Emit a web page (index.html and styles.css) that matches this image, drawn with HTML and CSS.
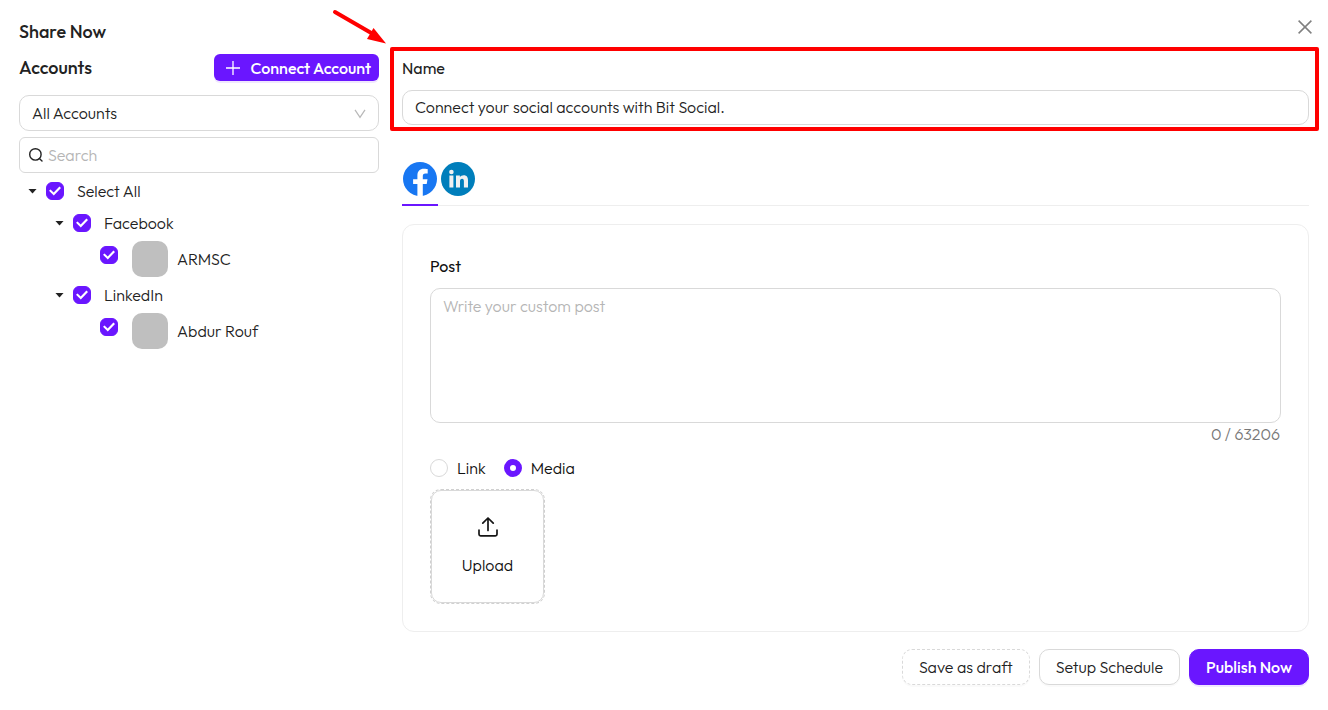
FILE: index.html
```html
<!DOCTYPE html>
<html lang="en">
<head>
<meta charset="utf-8">
<meta name="viewport" content="width=device-width, initial-scale=1">
<title>Share Now</title>
<link rel="stylesheet" href="styles.css">
</head>
<body>
<div class="share">
  <header class="share-header">
    <h1 class="title">Share Now</h1>
    <button class="close" type="button" aria-label="Close">
      <svg width="14" height="14" viewBox="0 0 14 14" fill="none" stroke="#808080" stroke-width="1.5"><path d="M.6.6l12.8 12.8M13.4.6L.6 13.4"/></svg>
    </button>
  </header>
  <div class="columns">
    <aside class="sidebar">
      <div class="accounts-head">
        <h2 class="title">Accounts</h2>
        <button class="connect" type="button">
          <svg width="14" height="14" viewBox="0 0 14 14" fill="none" stroke="#fff" stroke-width="1.3"><path d="M7 0v14M0 7h14"/></svg>
          Connect Account
        </button>
      </div>
      <div class="select-wrap">
        <select class="select" aria-label="Account filter"><option>All Accounts</option></select>
        <svg class="chevron" width="12" height="10" viewBox="0 0 12 10" fill="none" stroke="#b8b8b8" stroke-width="1.2"><path d="M1 .8l5 7.600 5-7.600"/></svg>
      </div>
      <div class="search">
        <svg width="16" height="16" viewBox="0 0 16 16" fill="none" stroke="#222" stroke-width="1.4"><circle cx="7.400" cy="7.400" r="5.700"/><path d="M11.400 11.400l2.600 2.500" stroke-linecap="round"/></svg>
        <input class="search-input" type="search" placeholder="Search" aria-label="Search">
      </div>
      <ul class="tree">
        <li>
          <div class="node">
            <span class="caret"></span>
            <label class="node-label"><input class="check" type="checkbox" checked>Select All</label>
          </div>
          <ul class="branch">
            <li>
              <div class="node">
                <span class="caret"></span>
                <label class="node-label"><input class="check" type="checkbox" checked>Facebook</label>
              </div>
              <label class="account"><input class="check" type="checkbox" checked><span class="avatar"></span>ARMSC</label>
            </li>
            <li>
              <div class="node">
                <span class="caret"></span>
                <label class="node-label"><input class="check" type="checkbox" checked>LinkedIn</label>
              </div>
              <label class="account"><input class="check" type="checkbox" checked><span class="avatar"></span>Abdur Rouf</label>
            </li>
          </ul>
        </li>
      </ul>
    </aside>
    <main class="main">
      <div class="name-field">
        <label class="name-label" for="name">Name</label>
        <input class="name-input" id="name" type="text" value="Connect your social accounts with Bit Social.">
        <div class="highlight"></div>
        <svg class="arrow" width="56" height="38" viewBox="0 0 56 38"><path d="M4 4L42 26" stroke="#f00" stroke-width="4" stroke-linecap="round"/><path d="M42.500 20L55 35.500 36 31Z" fill="#f00"/></svg>
      </div>
      <div class="tabs" role="tablist">
        <button class="tab tab-active" type="button" role="tab" aria-selected="true" aria-label="Facebook">
          <svg width="34" height="34" viewBox="0 0 34 34"><circle cx="17" cy="17" r="17" fill="#1877f2"/><path d="M14.400 34V22.100H10.100V17.200H14.400V13.500C14.400 9.200 16.900 6.800 20.900 6.800C22.700 6.800 24.700 7.200 24.700 7.200V11.400H22.500C20.300 11.400 19.800 12.700 19.800 14.100V17.200H24.500L23.700 22.100H19.800V34Z" fill="#fff"/></svg>
        </button>
        <button class="tab" type="button" role="tab" aria-selected="false" aria-label="LinkedIn">
          <svg width="34" height="34" viewBox="0 0 34 34"><circle cx="17" cy="17" r="17" fill="#007ebb"/><g fill="#f1f1f1"><circle cx="10.400" cy="10" r="2.300"/><path d="M8.400 13.600h4V25.600H8.400ZM15 13.600h3.900v1.600c.8-1.200 2.100-1.900 3.900-1.900 3.100 0 4.200 2.100 4.200 5.100v7.200h-4.100v-6.400c0-1.600-.4-2.500-1.800-2.500-1.500 0-2.100 1-2.100 2.500v6.400H15Z"/></g></svg>
        </button>
      </div>
      <section class="card">
        <label class="post-label" for="post">Post</label>
        <textarea class="post" id="post" placeholder="Write your custom post"></textarea>
        <div class="counter">0 / 63206</div>
        <div class="radios">
          <label class="radio-label"><input class="radio" type="radio" name="attach">Link</label>
          <label class="radio-label"><input class="radio" type="radio" name="attach" checked>Media</label>
        </div>
        <button class="upload" type="button">
          <span class="upload-inner">
            <svg width="20" height="20" viewBox="0 0 20 20" fill="none" stroke="#151515" stroke-width="1.700" stroke-linecap="round" stroke-linejoin="round"><path d="M1 13v4.200q0 1.600 1.600 1.600h14.800q1.600 0 1.600-1.600V13M10 13.500V1.200M4.800 6.200L10 1l5.200 5.200"/></svg>
            Upload
          </span>
        </button>
      </section>
      <div class="actions">
        <button class="btn btn-dashed" type="button">Save as draft</button>
        <button class="btn" type="button">Setup Schedule</button>
        <button class="btn btn-primary" type="button">Publish Now</button>
      </div>
    </main>
  </div>
</div>
</body>
</html>
```
FILE: styles.css
```css
* { box-sizing: border-box; }
body {
  margin: 0;
  background: #fff;
  color: #222;
  font: 300 16px/24px Outfit, Lato, sans-serif;
}
button, input, select, textarea { font: inherit; color: inherit; }
button { cursor: pointer; padding: 0; background: none; border: 0; }
svg { display: block; flex: none; }
ul { list-style: none; margin: 0; padding: 0; }

.share { padding: 14px 19px 24px; }
.share-header { display: flex; justify-content: space-between; align-items: flex-start; margin-right: -3px; }
.title { margin: 0; font-size: 18px; line-height: 36px; font-weight: 500; color: #222; }
.close { display: flex; align-items: center; height: 26px; }
.columns { display: grid; grid-template-columns: 360px minmax(0, 1fr); gap: 23px; }

.accounts-head { display: flex; justify-content: space-between; align-items: center; margin-bottom: 9px; height: 36px; }
.connect {
  display: flex; align-items: center; gap: 11px; height: 27px; padding: 0 8px 0 12px; margin-bottom: 1px;
  border-radius: 6px; background: #6a16ff; color: #fff; font-weight: 500;
  box-shadow: 0 2px 0 rgba(106, 22, 255, .1);
}
.select-wrap { position: relative; margin-bottom: 6px; }
.select {
  display: block; width: 100%; height: 36px; padding: 0 36px 0 12px; appearance: none;
  border: 1px solid #d9d9d9; border-radius: 10px; background: #fff;
}
.chevron { position: absolute; right: 13px; top: 14px; pointer-events: none; }
.search {
  display: flex; align-items: center; gap: 4px; height: 36px; padding: 0 9px 0 8px;
  border: 1px solid #d9d9d9; border-radius: 6px; margin-bottom: 2px;
}
.search-input { flex: 1; min-width: 0; border: 0; padding: 0; outline: 0; background: none; appearance: none; }
::placeholder { color: #b5b5b5; opacity: 1; }

.tree { padding-left: 9px; }
.branch { padding-left: 27px; }
.node { display: flex; align-items: center; height: 32px; }
.caret { width: 9px; height: 5px; margin-right: 9px; background: #222; clip-path: polygon(0 0, 100% 0, 50% 100%); }
.node-label { display: flex; align-items: center; gap: 13px; }
.check {
  appearance: none; display: grid; place-items: center; flex: none;
  width: 18px; height: 18px; margin: 0; border-radius: 6px; border: 1px solid #d9d9d9;
}
.check:checked { background: #6a16ff; border-color: #6a16ff; }
.check:checked::after {
  content: ""; width: 12px; height: 10px; background: #fff;
  clip-path: polygon(0 48%, 13% 34%, 39% 65%, 87% 6%, 100% 19%, 40% 94%);
}
.account { display: flex; align-items: center; height: 40px; padding-left: 45px; }
.account .check { align-self: flex-start; margin: 7px 14px 0 0; }
.avatar { width: 36px; height: 36px; margin-right: 9px; border-radius: 10px; background: #bfbfbf; }

.name-field { position: relative; padding-top: 6px; margin-bottom: 36px; }
.name-label { display: block; margin-bottom: 10px; font-weight: 400; }
.name-input { display: block; width: 100%; height: 35px; padding: 0 12px 1px; border: 1px solid #d9d9d9; border-radius: 10px; background: #fff; }
.highlight { position: absolute; inset: -3px -10px -6px -12px; border: 4px solid #f00; border-radius: 2px; pointer-events: none; }
.arrow { position: absolute; left: -71px; top: -42px; pointer-events: none; }

.tabs { display: flex; gap: 2px; border-bottom: 1px solid #eee; margin-bottom: 18px; }
.tab { padding: 1px 1px 8px; margin-bottom: -1px; border-bottom: 2px solid transparent; }
.tab-active { border-bottom-color: #6a16ff; }

.card { border: 1px solid #eee; border-radius: 12px; padding: 29px 27px 27px; margin-bottom: 17px; }
.post-label { display: block; margin-bottom: 10px; font-weight: 400; color: #111; }
.post { display: block; width: 100%; height: 135px; padding: 5px 12px; border: 1px solid #d9d9d9; border-radius: 10px; resize: none; background: #fff; }
.counter { margin: -1px 1px 10px; text-align: right; color: #777; }
.radios { display: flex; gap: 18px; margin-bottom: 9px; color: #111; }
.radio-label { display: flex; align-items: center; gap: 9px; }
.radio { appearance: none; width: 18px; height: 18px; margin: 0; border: 1px solid #d9d9d9; border-radius: 50%; background: #fff; }
.radio:checked { border: 6px solid #6a16ff; }
.upload { display: block; border: 1px dashed #d0d0d0; border-radius: 11px; color: #111; }
.upload-inner {
  display: flex; flex-direction: column; align-items: center; justify-content: center; gap: 16px;
  width: 113px; height: 113px; border: 1px solid #d9d9d9; border-radius: 10px;
}

.actions { display: flex; justify-content: flex-end; gap: 9px; }
.btn { height: 36px; padding: 0 16px; border: 1px solid #d9d9d9; border-radius: 10px; background: #fff; box-shadow: 0 2px 0 rgba(0, 0, 0, .02); }
.btn-dashed { border-style: dashed; }
.btn-primary { background: #6a16ff; border-color: #6a16ff; color: #fff; font-weight: 500; box-shadow: 0 2px 0 rgba(106, 22, 255, .1); }
```
